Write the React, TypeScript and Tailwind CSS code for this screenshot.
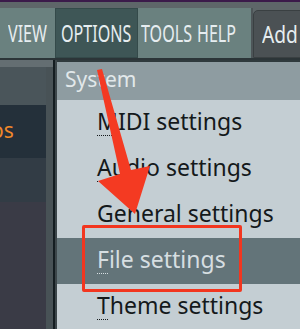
import type { ReactNode } from "react"

const menuFont = { fontFamily: '"Noto Sans", sans-serif' }

type TopItem = { label: string; width: string; pad: string; active?: boolean }

const topItems: TopItem[] = [
  { label: "VIEW", width: "w-[55px]", pad: "pl-[8px]" },
  { label: "OPTIONS", width: "w-[83px]", pad: "pl-[5px]", active: true },
  { label: "TOOLS", width: "w-[56px]", pad: "pl-[3px]" },
  { label: "HELP", width: "w-[57px]", pad: "pl-[3px]" },
]

const items = ["MIDI settings", "Audio settings", "General settings", "File settings", "Theme settings"]

function Narrow({ children }: { children: ReactNode }) {
  return (
    <span className="inline-block origin-left scale-x-[0.67] whitespace-nowrap text-[24px] leading-none text-[#e6edf0]">
      {children}
    </span>
  )
}

function MenuRow({ label, active }: { label: string; active?: boolean }) {
  return (
    <div
      className={`flex h-[46px] items-center pb-[3px] pl-[40px] text-[23px] whitespace-nowrap ${
        active ? "bg-[#637479] text-[#d6dee1]" : "text-[#14191b]"
      }`}
    >
      <span
        className={`underline decoration-dotted decoration-1 underline-offset-[5px] ${
          active ? "decoration-[#d6dee1]" : "decoration-[#14191b]"
        }`}
      >
        {label[0]}
      </span>
      <span>{label.slice(1)}</span>
    </div>
  )
}

export default function App() {
  return (
    <div className="relative h-[329px] w-[300px] overflow-hidden bg-[#5e6669]" style={menuFont}>
      <div className="h-[2px] bg-[#3b1a4a]" />
      <div className="h-[6px] bg-[#5e6669]" />

      {/* menu bar */}
      <div className="flex h-[50px]">
        <div className="flex w-[251px] bg-[#6a817f]">
          {topItems.map((t) => (
            <div
              key={t.label}
              className={`flex h-full items-center ${t.width} ${t.pad} ${
                t.active ? "border border-[#344a4a] bg-[#3e5656]" : ""
              }`}
            >
              <Narrow>{t.label}</Narrow>
            </div>
          ))}
        </div>
        <div className="flex w-[12px] justify-center">
          <div className="w-[2px] bg-[#4d5558]" />
        </div>
        <div className="mt-[2px] flex flex-1 items-center rounded-tl-[5px] border border-[#3a4042] bg-[#4b5154] pl-[8px]">
          <span className="inline-block origin-left scale-x-[0.8] whitespace-nowrap text-[24px] leading-none text-[#e6edf0]">
            Add
          </span>
        </div>
      </div>
      <div className="h-[2px] bg-[#2c3538]" />

      {/* body */}
      <div className="flex h-[269px]">
        <div className="flex w-[55px]">
          <div className="flex w-[46px] flex-col">
            <div className="h-[7px] bg-[#646e72]" />
            <div className="h-[38px] bg-[#4a555a]" />
            <div className="flex h-[53px] items-center overflow-hidden bg-[#24303a] pb-[2px]">
              <span className="ml-[-9px] text-[21px] text-[#f0882a]">os</span>
            </div>
            <div className="h-[44px] bg-[#323c45]" />
            <div className="flex-1 bg-[#3a3b46]" />
          </div>
          <div className="flex w-[7px] flex-col bg-[#485256]">
            <div className="h-[7px] bg-[#646e72]" />
          </div>
          <div className="w-[2px] bg-[#141d21]" />
        </div>

        <div className="flex-1 border-l-2 border-[#3c464a] bg-[#c4ced3]">
          <div className="h-[2px] bg-[#2f3a3d]" />
          <div className="flex h-[38px] items-center bg-[#8e9ca1] pb-[2px] pl-[8px] text-[21px] text-[#e2e8ea]">
            System
          </div>
          {items.map((label) => (
            <MenuRow key={label} label={label} active={label === "File settings"} />
          ))}
        </div>
      </div>

      {/* annotation: arrow and highlight box */}
      <svg className="pointer-events-none absolute inset-0" width="300" height="329" viewBox="0 0 300 329">
        <polygon
          points="97,70 102,69 131,170 150,166 135,214 98,181 120,174"
          fill="#f43a22"
        />
      </svg>
      <div className="pointer-events-none absolute left-[82px] top-[225px] h-[67px] w-[160px] rounded-[2px] border-[3px] border-[#f2361f]" />
    </div>
  )
}
